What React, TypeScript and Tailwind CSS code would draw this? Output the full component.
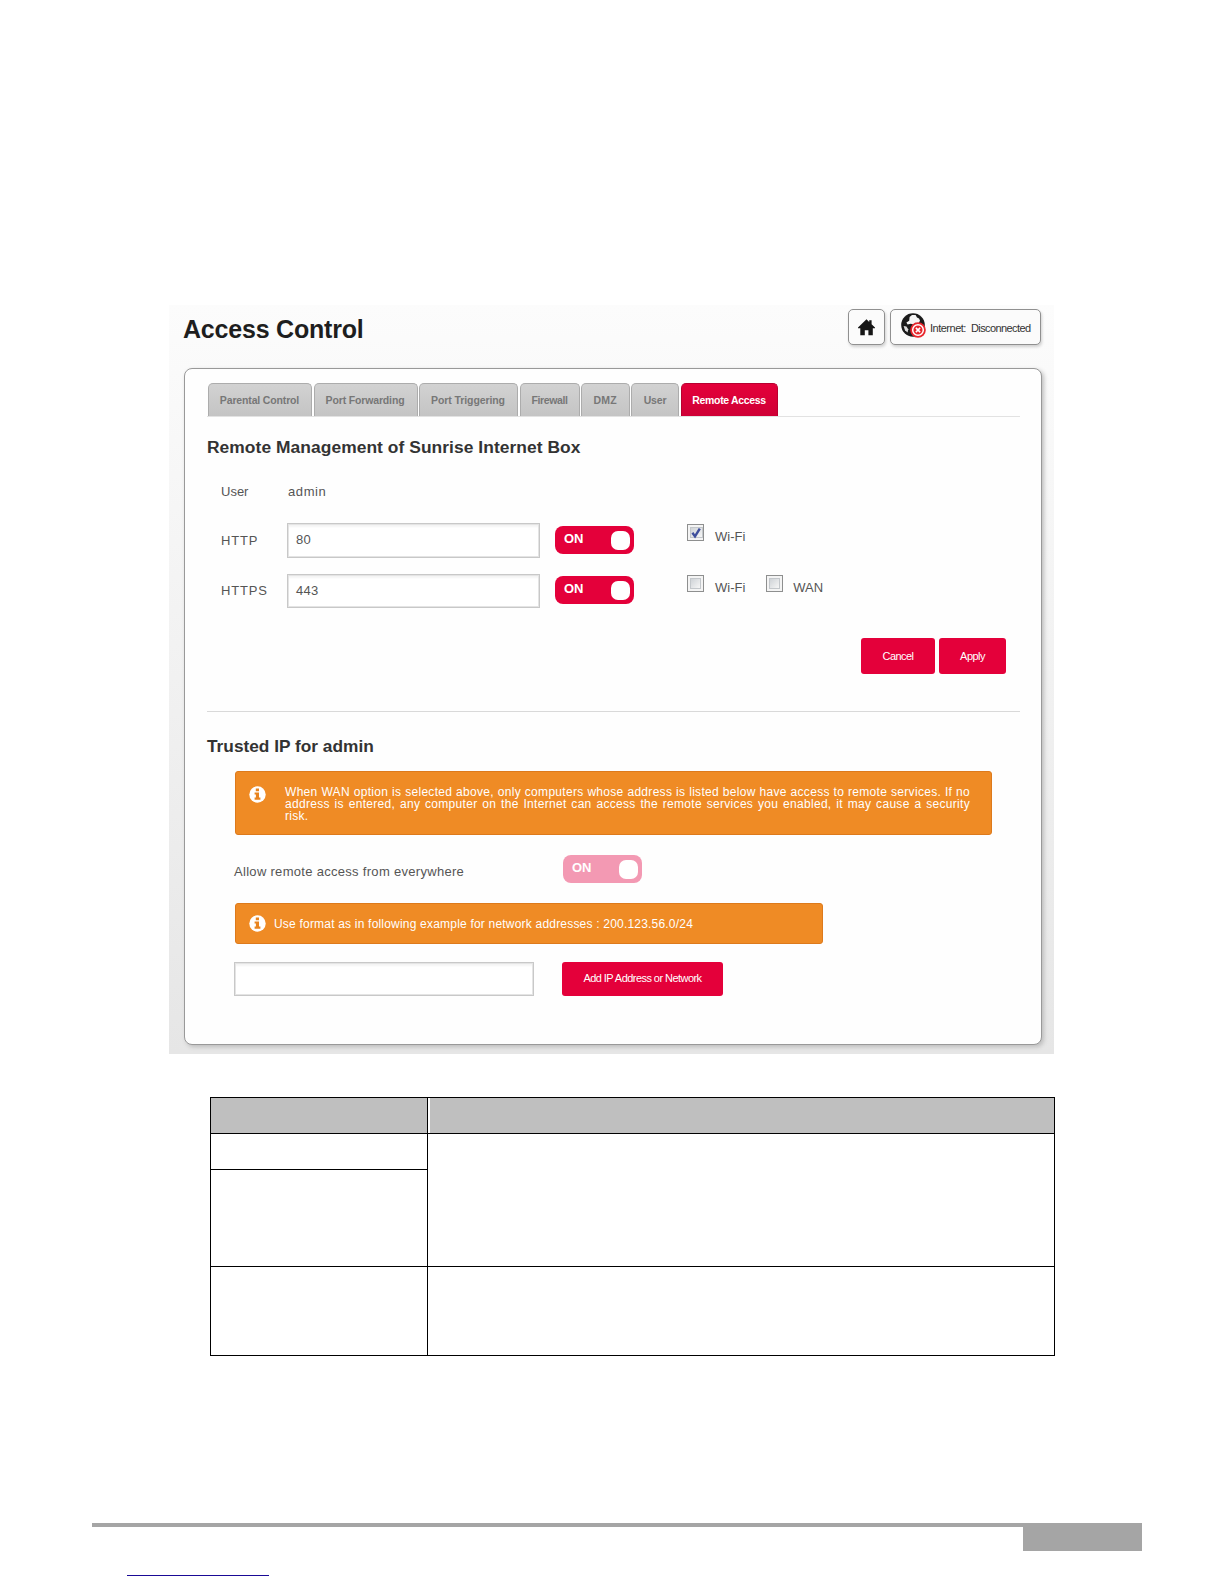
import type { ReactNode } from "react";

const tabs = [
    { label: "Parental Control", box: "w-[104px]", text: "tracking-[-0.15px] pr-px" },
    { label: "Port Forwarding", box: "w-[104px]", text: "tracking-[-0.15px] pr-px" },
    { label: "Port Triggering", box: "w-[99px]", text: "tracking-[-0.1px] pr-px" },
    { label: "Firewall", box: "w-[60px]", text: "tracking-[-0.4px]" },
    { label: "DMZ", box: "w-[48.5px]", text: "tracking-[0.2px]" },
    { label: "User", box: "w-[48px]", text: "tracking-[-0.2px]" },
];

function HomeIcon() {
    return (
        <svg width="17" height="17" viewBox="0 0 17 17" fill="#161616">
            <path d="M8.5 0.2 11.2 2.9V1.2H13.6V5.2L17 8.5V9.2H14.8V16.2H10.4V11.2H6.8V16.2H2.3V9.2H0V8.5Z" />
        </svg>
    );
}

function GlobeIcon() {
    return (
        <svg width="25" height="25" viewBox="0 0 25 25">
            <circle cx="12" cy="12" r="11.8" fill="#1b1b1b" />
            <path d="M8.6 4 11 1.9 14.6 2 16 4.6 18 5.4 19 7.6 17.6 10.4 14.6 9.8 12.6 11.6 9.8 10.8 6.6 11.4 5.4 9.4 8.2 7.8Z" fill="#f5f5f5" />
            <path d="M2.6 13 5.4 13.4 7.2 16.2 6.6 19.4 4 17.2Z" fill="#dcdcdc" />
            <circle cx="17" cy="17" r="7.8" fill="#e8252b" />
            <circle cx="17" cy="17" r="5.3" fill="#e8252b" stroke="#fff" strokeWidth="1.5" />
            <path d="M14.9 14.9 19.1 19.1M19.1 14.9 14.9 19.1" stroke="#fff" strokeWidth="1.6" />
        </svg>
    );
}

function InfoIcon() {
    return (
        <svg width="17" height="17" viewBox="0 0 17 17" className="shrink-0">
            <circle cx="8.5" cy="8.5" r="8.2" fill="#fff" />
            <path d="M6.8 2.6H10V5.2H6.8ZM5.6 6.4H10V11.6H11.4V13.8H5.6V11.6H6.9V8.4H5.6Z" fill="#e8841f" />
        </svg>
    );
}

function Toggle({ disabled = false }: { disabled?: boolean }) {
    return (
        <div className={`flex h-7 w-[79px] shrink-0 items-center justify-between rounded-lg pl-[9px] pr-1 ${disabled ? "bg-[#f399b3]" : "bg-[#e4003a]"}`}>
            <span className="pb-[2px] text-[13px] leading-4 font-bold text-white">ON</span>
            <span className="size-[19px] rounded-[7px] bg-white" />
        </div>
    );
}

function Checkbox({ checked = false }: { checked?: boolean }) {
    return (
        <span className="mt-px flex size-[17px] shrink-0 border border-[#8e8f8f] bg-[#f4f4f4] p-0.5">
            <span className="flex-1 border border-[#c3c7cb] bg-linear-to-br from-[#cfd3d7] to-[#f6f6f6]">
                {checked && (
                    <svg width="11" height="11" viewBox="0 0 11 11" fill="none">
                        <path d="M1.4 4.8 4 8.4 8.8 0.6" stroke="#3f4f9c" strokeWidth="2.4" />
                    </svg>
                )}
            </span>
        </span>
    );
}

function Field({ value, className }: { value?: string; className: string }) {
    return (
        <div className={`shrink-0 border border-[#c8c8c8] bg-white pl-2 text-[13px] leading-[32px] tracking-[0.3px] shadow-[inset_0_0_0_1px_#e4e4e4,inset_0_3px_2px_#f4f4f4] ${className}`}>
            {value}
        </div>
    );
}

function Button({ children, className }: { children: ReactNode; className: string }) {
    return (
        <button className={`flex shrink-0 justify-center rounded-[3px] bg-[#e4003a] text-[11px] tracking-[-0.55px] text-white ${className}`}>
            {children}
        </button>
    );
}

export default function App() {
    return (
        <div className="flex h-[1584px] w-[1224px] flex-col overflow-hidden bg-white pt-[305px] font-['Liberation_Sans',Arial,sans-serif] text-[#555]">
            <section className="ml-[169px] h-[749px] w-[885px] shrink-0 bg-linear-to-b from-[#fcfcfc] to-[#e6e6e6] pt-1 pl-[15px]">
                <header className="flex h-[59px] w-[857px] items-start">
                    <h1 className="-ml-px flex-1 text-[25px] leading-[40px] font-bold tracking-[-0.2px] text-[#1e1e1e]">Access Control</h1>
                    <button className="mr-[5px] flex h-9 w-[37px] items-center justify-center rounded-[5px] border-[1.5px] border-[#909090] bg-[#fbfbfb] shadow-[1px_2px_3px_#d0d0d0]">
                        <HomeIcon />
                    </button>
                    <div className="flex h-9 w-[151px] rounded-[5px] border-[1.5px] border-[#909090] bg-[#fbfbfb] pt-[3px] pl-[10px] text-[11px] shadow-[1px_2px_3px_#d0d0d0]">
                        <GlobeIcon />
                        <span className="ml-1 w-[41px] pt-[3px] leading-6 tracking-[-0.5px] text-[#333]">Internet:</span>
                        <span className="pt-[3px] leading-6 tracking-[-0.6px] text-[#333]">Disconnected</span>
                    </div>
                </header>

                <main className="h-[677px] w-[858px] rounded-lg border-[1.5px] border-[#999] bg-[#fefefe] pt-[14px] pl-[22px] shadow-[2px_2px_4px_#bdbdbd]">
                    <nav className="flex h-[34px] w-[813px] gap-[1.5px] border-b border-[#e2e2e2] pl-px">
                        {tabs.map((tab) => (
                            <div key={tab.label} className={`shrink-0 rounded-t-[5px] border border-b-0 border-[#acacac] bg-linear-to-b from-[#d2d2d2] to-[#c4c4c4] text-center text-[10.5px] leading-[33px] font-bold text-[#777] ${tab.box} ${tab.text}`}>
                                {tab.label}
                            </div>
                        ))}
                        <div className="w-[97px] rounded-t-[5px] border border-b-0 border-[#b80030] bg-linear-to-b from-[#e4003a] to-[#cf0036] text-center text-[10.5px] leading-[33px] font-bold tracking-[-0.35px] text-white">
                            Remote Access
                        </div>
                    </nav>

                    <h2 className="mt-[18px] text-[17.4px] leading-6 font-bold tracking-[0.06px] text-[#333]">Remote Management of Sunrise Internet Box</h2>

                    <div className="mt-[21px] flex h-[43px] pl-[14px] text-[13px] leading-6">
                        <span className="w-[67px]">User</span>
                        <span className="tracking-[0.6px]">admin</span>
                    </div>
                    <div className="flex h-[51px] pl-[14px] text-[13px]">
                        <span className="w-[66px] pt-[6px] leading-6 tracking-[0.8px]">HTTP</span>
                        <Field value="80" className="h-[35px] w-[253px]" />
                        <div className="mt-[3px] ml-[15px]"><Toggle /></div>
                        <div className="ml-[53px] flex">
                            <Checkbox checked />
                            <span className="ml-[11px] pt-[2px] leading-6">Wi-Fi</span>
                        </div>
                    </div>
                    <div className="flex h-[64px] pl-[14px] text-[13px]">
                        <span className="w-[66px] pt-[5px] leading-6 tracking-[0.8px]">HTTPS</span>
                        <Field value="443" className="h-[34px] w-[253px]" />
                        <div className="mt-[2px] ml-[15px]"><Toggle /></div>
                        <div className="ml-[53px] flex">
                            <Checkbox />
                            <span className="mr-[21px] ml-[11px] pt-[2px] leading-6">Wi-Fi</span>
                            <Checkbox />
                            <span className="ml-[10px] pt-[2px] leading-6">WAN</span>
                        </div>
                    </div>
                    <div className="flex h-[73px] w-[799px] justify-end gap-1">
                        <Button className="h-9 w-[74px] leading-9">Cancel</Button>
                        <Button className="h-9 w-[67px] leading-9">Apply</Button>
                    </div>

                    <div className="w-[813px] border-t border-[#d9d9d9]" />
                    <h2 className="mt-[22px] text-[17.3px] leading-6 font-bold text-[#333]">Trusted IP for admin</h2>

                    <div className="mt-[13px] ml-[28px] flex h-[64px] w-[757px] items-start rounded-[3px] border border-[#dd7a1c] bg-[#ef8b25] pt-[14px] pl-[13px] text-white">
                        <InfoIcon />
                        <p className="ml-[19px] w-[685px] text-justify text-[12px] leading-3 tracking-[0.3px]">
                            When WAN option is selected above, only computers whose address is listed below have access to remote services. If no address is entered, any computer on the Internet can access the remote services you enabled, it may cause a security risk.
                        </p>
                    </div>
                    <div className="mt-5 flex h-12 pl-[27px]">
                        <span className="w-[329px] pt-[5px] text-[13px] leading-6 tracking-[0.3px]">Allow remote access from everywhere</span>
                        <Toggle disabled />
                    </div>
                    <div className="ml-[28px] flex h-[41px] w-[588px] items-center rounded-[3px] border border-[#dd7a1c] bg-[#ef8b25] pl-[13px] text-white">
                        <InfoIcon />
                        <span className="ml-2 text-[12px] tracking-[0.2px]">Use format as in following example for network addresses : 200.123.56.0/24</span>
                    </div>
                    <div className="mt-[18px] flex pl-[27px]">
                        <Field className="h-[34px] w-[300px]" />
                        <Button className="ml-7 h-[34px] w-[161px] leading-8">Add IP Address or Network</Button>
                    </div>
                </main>
            </section>

            <table className="mt-[43px] ml-[210px] w-[845px] shrink-0 table-fixed border-collapse [&_td]:border [&_td]:border-black">
                <tbody>
                    <tr className="h-9 bg-[#bfbfbf]"><td className="w-[217px]" /><td className="shadow-[inset_2px_0_0_#fff]" /></tr>
                    <tr className="h-9"><td /><td rowSpan={2} /></tr>
                    <tr className="h-[97px]"><td /></tr>
                    <tr className="h-[89px]"><td /><td /></tr>
                </tbody>
            </table>

            <footer className="mt-auto ml-[92px] h-[61px] w-[1050px] shrink-0 border-t-4 border-[#a5a5a5]">
                <div className="ml-auto h-6 w-[119px] bg-[#a5a5a5]" />
                <div className="mt-6 ml-[35px] h-px w-[142px] bg-[#1a0a96]" />
            </footer>
        </div>
    );
}
